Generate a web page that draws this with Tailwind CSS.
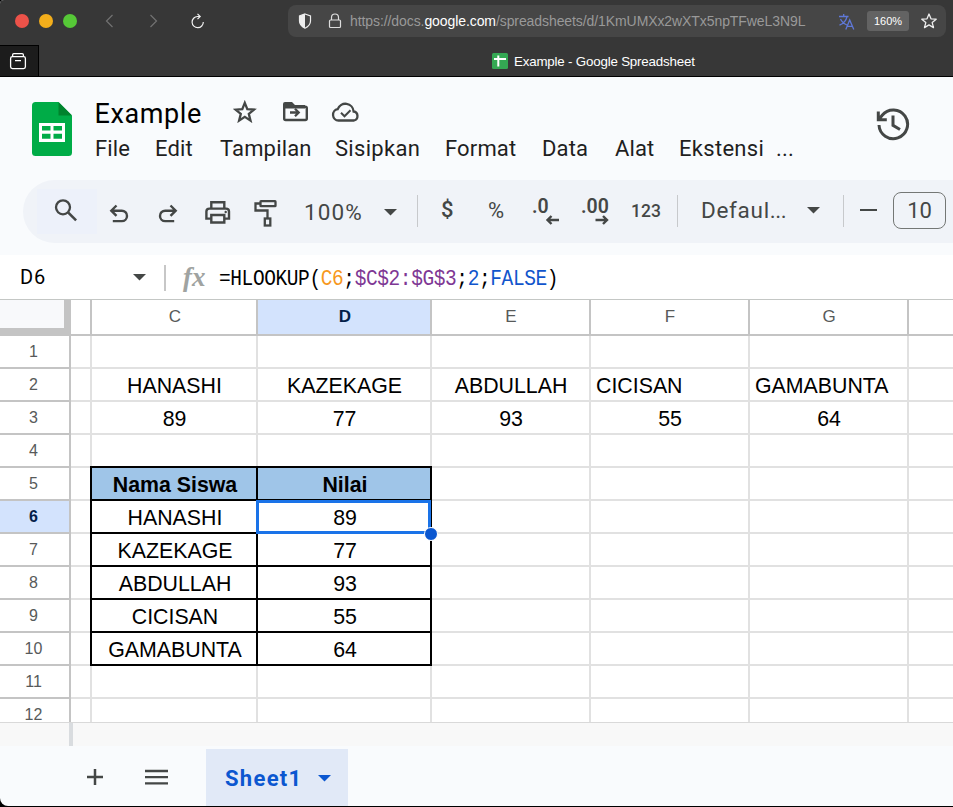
<!DOCTYPE html>
<html lang="id">
<head>
<meta charset="utf-8">
<title>Example - Google Spreadsheet</title>
<script src="https://cdn.jsdelivr.net/npm/@tailwindcss/browser@4"></script>
</head>
<body class="w-[953px] h-[807px] overflow-hidden bg-black font-['Liberation_Sans',sans-serif]">
<div class="flex flex-col w-[953px] h-[806px] overflow-hidden rounded-bl-[8px] rounded-tl-[4px] bg-[#f9fbfd]">

  <!-- Browser toolbar -->
  <div class="flex items-center h-[45px] shrink-0 bg-[#373737] pb-[3px]">
    <div class="flex gap-[10px] ml-[15px]">
      <span class="size-[14px] rounded-full bg-[#ec5249]"></span>
      <span class="size-[14px] rounded-full bg-[#f3ae1b]"></span>
      <span class="size-[14px] rounded-full bg-[#56c837]"></span>
    </div>
    <svg class="ml-[28px]" width="8" height="14" viewBox="105 14 8 14" fill="none" stroke="#727272" stroke-width="1.2"><path d="M112.5 15l-6 6 6 6"/></svg>
    <svg class="ml-[37px]" width="8" height="14" viewBox="150 14 8 14" fill="none" stroke="#727272" stroke-width="1.2"><path d="M150.5 15l6 6-6 6"/></svg>
    <svg class="ml-[33px]" width="14" height="16" viewBox="191 13 14 16" fill="none" stroke="#f0f0f0" stroke-width="1.2"><path d="M199.5 16.5h-2a5.6 5.6 0 1 0 5.8 5.5M197.500 13.800l2.700 2.700-2.700 2.700"/></svg>
    <div class="flex items-center ml-[83px] w-[658px] h-[32px] rounded-[8px] bg-[#464646] text-[14px] text-[#999]">
      <svg class="ml-[10px]" width="14" height="16" viewBox="298 13 14 16"><path d="M305 14l5.500 2v5c0 3-2 5.500-5.500 7.200-3.500-1.700-5.500-4.200-5.500-7.200v-5z" fill="none" stroke="#eee" stroke-width="1.200"/><path d="M305 14v14.200c-3.500-1.700-5.500-4.200-5.500-7.200v-5z" fill="#eee"/></svg>
      <svg class="ml-[16px]" width="14" height="16" viewBox="328 13 14 16" fill="none" stroke="#ddd" stroke-width="1.200"><rect x="329.500" y="20" width="11" height="7.500" rx="1"/><path d="M331.500 20v-2.500a3.500 3.500 0 0 1 7 0v2.500"/></svg>
      <span class="ml-[8px] w-[480px] whitespace-nowrap tracking-[-0.085px]">https://docs.<span class="text-white">google.com</span>/spreadsheets/d/1KmUMXx2wXTx5npTFweL3N9L</span>
      <svg class="ml-[8px]" width="18" height="17" viewBox="838 12 18 17" fill="none" stroke="#5f78d8" stroke-width="1.300"><path d="M839 15.500h9.500M843.700 13v2.500M840.500 18c1.500 3 3.500 5 6.500 6M847 15.700c-1 4.500-3.500 7-7.500 8.500M845.800 28.500l3.900-9.500 4.100 9.500M847.200 25.300h5.200"/></svg>
      <span class="ml-[11px] w-[42px] h-[20px] rounded-[3px] bg-[#636363] text-white text-[11px] leading-[20px] text-center">160%</span>
      <svg class="ml-[12px]" width="16" height="16" viewBox="921 13 16 16" fill="none" stroke="#eee" stroke-width="1.300" stroke-linejoin="round"><path d="M929 14l2 4.800 5.200.4-4 3.400 1.300 5-4.500-2.700-4.500 2.700 1.300-5-4-3.400 5.200-.4z"/></svg>
    </div>
  </div>

  <!-- Tab strip -->
  <div class="flex h-[32px] shrink-0 bg-[#373737] border-b border-black">
    <div class="w-[39px] h-[31px] bg-[#1c1c1c] border-t border-r border-black">
      <svg class="ml-[9px] mt-[6px]" width="18" height="18" viewBox="9 52 18 18" fill="none" stroke="#fff" stroke-width="1.300"><rect x="10.600" y="56.600" width="14.800" height="12" rx="1.800"/><path d="M12.600 56.500v-1.600q0-1.300 1.300-1.300h8.200q1.300 0 1.300 1.300v1.600M15 60.600h6"/></svg>
    </div>
    <div class="flex items-center ml-[453px] gap-[6px]">
      <svg width="16" height="16" viewBox="0 0 16 16"><rect width="16" height="16" rx="1.500" fill="#34a853"/><path d="M2 6h12M6.300 2.500v11" stroke="#fff" stroke-width="2"/></svg>
      <span class="mt-[2px] text-white text-[13.330px] tracking-[-0.190px] whitespace-nowrap">Example - Google Spreadsheet</span>
    </div>
  </div>

  <!-- Document header -->
  <div class="flex h-[103px] shrink-0 font-[Roboto,sans-serif]">
    <svg class="ml-[32px] mt-[25px]" width="40" height="54" viewBox="0 0 40 54"><path d="M3.500 0H26.500L40 13.500V50.500Q40 54 36.500 54H3.500Q0 54 0 50.500V3.500Q0 0 3.500 0z" fill="#00ac47"/><path d="M26.500 0L40 13.500H26.500z" fill="#00832d"/><path d="M7 21h26v19H7zM10 24v4.500h8.500V24zM21.500 24v4.500H30V24zM10 31.700v5h8.500v-5zM21.500 31.700v5H30v-5z" fill="#fff" fill-rule="evenodd"/></svg>
    <div class="flex flex-col ml-[22px] w-[782px]">
      <div class="flex items-center mt-[20px] h-[34px]">
        <span class="w-[139px] text-[27px] leading-[34px] text-black tracking-[0.600px] pl-[0.500px]">Example</span>
        <svg class="mb-[7px]" width="24" height="24" viewBox="233 99 24 24" fill="none" stroke="#444746" stroke-width="2.300"><path d="M244.800 102.800l2.500 6.300 6.700.500-5.200 4.300 1.700 6.700-5.700-3.700-5.700 3.700 1.700-6.700-5.200-4.300 6.700-.500z"/></svg>
        <svg class="ml-[25px] mb-[4px]" width="27" height="22" viewBox="282 102 27 22"><path d="M284.200 107v12.500q0 1.500 1.500 1.500h19.600q1.500 0 1.500-1.500v-10.200q0-1.500-1.500-1.500H295" fill="none" stroke="#444746" stroke-width="2.400"/><path d="M283 108v-3q0-2 2-2h7l3 3h10v3.500H283z" fill="#444746"/><path d="M290 113.500h8M295 109.800l3.700 3.700-3.700 3.700" fill="none" stroke="#444746" stroke-width="2.300"/></svg>
        <svg class="ml-[22px] mb-[4px]" width="30" height="22" viewBox="331 101 30 22" fill="none" stroke="#444746" stroke-width="2.300"><path d="M338.500 120.500a5.700 5.700 0 0 1-.8-11.300 8.200 8.200 0 0 1 15.900 2.300 4.600 4.600 0 0 1 .4 9z"/><path d="M341 112.800l3.500 3.500 6-6" stroke-width="2"/></svg>
      </div>
      <div class="flex ml-[1px] mt-[3px] h-[29px] text-[22px] leading-[29px] text-[#1f1f1f] whitespace-nowrap tracking-[0.150px]">
        <span class="w-[60px]">File</span><span class="w-[65px]">Edit</span><span class="w-[115px]">Tampilan</span><span class="w-[110px] tracking-[0.300px]">Sisipkan</span><span class="w-[97px]">Format</span><span class="w-[73px]">Data</span><span class="w-[64px]">Alat</span><span class="w-[97px] tracking-[0.300px]">Ekstensi</span><span>...</span>
      </div>
    </div>
    <svg class="mt-[30px]" width="34" height="34" viewBox="876 107 34 34" fill="none" stroke="#444746" stroke-width="3"><path d="M879 125a14.300 14.300 0 1 0 3.200-9.700l-3.400 4.200M878.300 111.500v8.300h8.500M893 115.500v9.800l7 4.200"/></svg>
  </div>

  <!-- Toolbar -->
  <div class="flex h-[63px] shrink-0 ml-[23px] rounded-l-[32px] bg-[#f0f3f8] text-[#444746] font-[Roboto,sans-serif] font-medium whitespace-nowrap overflow-hidden">
    <div class="ml-[14px] mt-[9px] w-[60px] h-[45px] bg-[#edf1fa] shrink-0">
      <svg class="ml-[16px] mt-[8px]" width="26" height="26" viewBox="53 197 26 26" fill="none" stroke="#444746" stroke-width="2.300"><circle cx="63" cy="207.300" r="7"/><path d="M68.300 212.600l7.800 7.800" stroke-width="2.600"/></svg>
    </div>
    <svg class="ml-[11px] mt-[24px] shrink-0" width="22" height="20" viewBox="108 204 22 20" fill="none" stroke="#444746" stroke-width="2.400"><path d="M116.500 205.500l-5.200 5.200 5.200 5.200M111.500 210.700h10.300a5.200 5.200 0 0 1 0 10.400h-9"/></svg>
    <svg class="ml-[27px] mt-[24px] shrink-0" width="22" height="20" viewBox="157 204 22 20" fill="none" stroke="#444746" stroke-width="2.400"><path d="M170.500 205.500l5.200 5.200-5.200 5.200M175.500 210.700h-10.300a5.200 5.200 0 0 0 0 10.400h9"/></svg>
    <svg class="ml-[25px] mt-[20px] shrink-0" width="28" height="25" viewBox="204 200 28 25" fill="none" stroke="#444746" stroke-width="2.400"><path d="M211.300 208v-5.800h13v5.800M211 218.600h-4.600v-7q0-3 3-3h16.600q3 0 3 3v7H225"/><path d="M211.300 215h13v7.500h-13z"/><circle cx="225.700" cy="212" r=".6" stroke-width="1.200"/></svg>
    <svg class="ml-[21px] mt-[19px] shrink-0" width="26" height="29" viewBox="253 199 26 29" fill="none" stroke="#444746" stroke-width="2.300"><rect x="260.500" y="201.200" width="15" height="5" rx=".5"/><path d="M260.500 203.500h-5v7h12v8"/><rect x="264.800" y="218.500" width="5.500" height="7"/></svg>
    <span class="ml-[25px] mt-[17px] w-[80px] text-[22.500px] leading-[30px] font-normal tracking-[1.100px]">100%</span>
    <svg class="mt-[29px] shrink-0" width="13" height="7" viewBox="0 0 13 7"><path d="M0 0h13L6.500 6.500z" fill="#444746"/></svg>
    <div class="ml-[20px] mt-[15px] w-px h-[32px] bg-[#c7c9cc] shrink-0"></div>
    <span class="ml-[23px] mt-[15px] w-[47px] text-[22px] leading-[30px]">$</span>
    <span class="mt-[16px] w-[44px] text-[22px] leading-[30px] font-normal tracking-[1px]">%</span>
    <svg class="mt-[11px] shrink-0" width="28" height="36" viewBox="532 191 28 36"><text x="532" y="213.200" font-size="19.500" fill="#444746" font-family="Roboto" font-weight="600">.0</text><path d="M559 220h-11.500M551.500 216l-4 4 4 4" fill="none" stroke="#444746" stroke-width="2.400"/></svg>
    <svg class="ml-[21px] mt-[11px] shrink-0" width="29" height="36" viewBox="581 191 29 36"><text x="581" y="213.200" font-size="19.500" fill="#444746" font-family="Roboto" font-weight="600">.00</text><path d="M595.500 220h11.500M603 216l4 4-4 4" fill="none" stroke="#444746" stroke-width="2.400"/></svg>
    <span class="ml-[21px] mt-[16px] w-[46px] text-[17.500px] leading-[30px]">123</span>
    <div class="mt-[15px] w-px h-[32px] bg-[#c7c9cc] shrink-0"></div>
    <span class="ml-[23px] mt-[15px] w-[106px] text-[22.500px] leading-[30px] font-normal tracking-[0.700px]">Defaul<span class="tracking-[-0.500px]">...</span></span>
    <svg class="mt-[27px] shrink-0" width="13" height="7" viewBox="0 0 13 7"><path d="M0 0h13L6.500 6.500z" fill="#444746"/></svg>
    <div class="ml-[23px] mt-[15px] w-px h-[32px] bg-[#c7c9cc] shrink-0"></div>
    <div class="ml-[16px] mt-[29px] w-[17px] h-[2px] bg-[#444746] shrink-0"></div>
    <div class="ml-[16px] mt-[12px] w-[53px] h-[37px] rounded-[8px] border border-[#747775] shrink-0 text-center text-[22px] leading-[36px] font-normal">10</div>
  </div>

  <!-- Formula bar -->
  <div class="flex h-[45px] mt-[12px] mb-[-1px] shrink-0 bg-white border-b border-[#c4c7c5]">
    <span class="ml-[20px] mt-[7px] w-[113px] text-[20px] leading-[30px] text-black tracking-[0.800px] font-[Roboto,sans-serif]">D6</span>
    <svg class="mt-[19px] shrink-0" width="13" height="7" viewBox="0 0 13 7"><path d="M0 0h13L6.500 6.500z" fill="#444746"/></svg>
    <div class="ml-[18px] mt-[10px] w-[2px] h-[26px] bg-[#c7c7c7]"></div>
    <span class="ml-[17px] mt-[7px] w-[36px] text-[27px] leading-[30px] font-bold italic text-[#a0a3a1] font-['Liberation_Serif',serif]">fx</span>
    <span class="mt-[10px] h-[28px] scale-y-[1.1] text-[19.500px] leading-[29px] tracking-[-0.400px] text-black whitespace-pre font-['Liberation_Mono',monospace]">=HLOOKUP(<span class="text-[#f7981d]">C6</span>;<span class="text-[#7e3794]">$C$2:$G$3</span>;<span class="text-[#1155cc]">2</span>;<span class="text-[#1155cc]">FALSE</span>)</span>
  </div>

  <!-- Sheet -->
  <div class="mt-px relative h-[422px] shrink-0 overflow-hidden bg-white">
    <div class="grid w-[955px] grid-cols-[71px_21px_166px_174px_159px_159px_159px_46px] text-[17px] leading-[34px] text-center text-[#575a5a]">
      <div class="h-[36px] bg-[#f8f9fb] border-r-[7px] border-b-[8px] border-[#c4c4c4]"></div>
      <div class="h-[36px] border-r-2 border-b-2 border-[#c4c4c4]"></div>
      <div class="h-[36px] pl-[2px] border-r-2 border-b-2 border-[#c4c4c4]">C</div>
      <div class="h-[36px] pl-[2px] border-r-2 border-b-2 border-[#c4c4c4] bg-[#d3e3fd] font-bold text-[#041e49]">D</div>
      <div class="h-[36px] pl-[1px] border-r-2 border-b-2 border-[#c4c4c4]">E</div>
      <div class="h-[36px] pl-[1px] border-r-2 border-b-2 border-[#c4c4c4]">F</div>
      <div class="h-[36px] pl-[1px] border-r-2 border-b-2 border-[#c4c4c4]">G</div>
      <div class="h-[36px] border-b-2 border-[#c4c4c4]"></div>
    </div>
    <div id="rows" class="grid w-[955px] grid-cols-[71px_21px_166px_174px_159px_159px_159px_46px] auto-rows-[33px] text-center text-[21.330px] text-black"></div>
    <!-- Active cell outline and fill handle -->
    <div class="absolute left-[256px] top-[200px] w-[175px] h-[34px] border-[3px] border-[#1a73e8]"></div>
    <div class="absolute left-[424px] top-[227px] size-[14px] rounded-full bg-[#0b57d0] border border-white"></div>
  </div>

  <!-- Horizontal scroll area -->
  <div class="h-[24px] shrink-0 bg-[#f8f8f8] border-t border-[#d9d9d9] flex">
    <div class="ml-[69px] w-[4px] bg-[#d9dcdf]"></div>
  </div>

  <!-- Sheet tabs -->
  <div class="flex h-[60px] shrink-0">
    <svg class="ml-[86px] mt-[23px]" width="18" height="18" viewBox="86 769 18 18" stroke="#444746" stroke-width="2.500"><path d="M95 769v16M87 777h16" /></svg>
    <svg class="ml-[41px] mt-[22px]" width="23" height="18" viewBox="145 768 23 18" stroke="#444746" stroke-width="2.300"><path d="M145 771h23M145 777.200h23M145 783.300h23"/></svg>
    <div class="flex ml-[38px] mt-[3px] w-[142px] h-[57px] bg-[#e1e9f7] text-[#0b57d0]">
      <span class="ml-[19px] mt-[15px] w-[93px] text-[22px] leading-[30px] font-bold tracking-[1.300px] font-[Roboto,sans-serif]">Sheet1</span>
      <svg class="mt-[26px]" width="13" height="7" viewBox="0 0 13 7"><path d="M0 0h13L6.500 6.500z" fill="#0b57d0"/></svg>
    </div>
  </div>
</div>

<script>
const data = {
  2: ['HANASHI', 'KAZEKAGE', 'ABDULLAH', 'CICISAN', 'GAMABUNTA'],
  3: ['89', '77', '93', '55', '64'],
  5: ['Nama Siswa', 'Nilai'],
  6: ['HANASHI', '89'],
  7: ['KAZEKAGE', '77'],
  8: ['ABDULLAH', '93'],
  9: ['CICISAN', '55'],
  10: ['GAMABUNTA', '64'],
};
const plain = 'border-r-2 border-b-2 border-[#e1e1e1] leading-[34px] pl-[1px]';
const left = 'border-r-2 border-b-2 border-[#e1e1e1] leading-[34px] text-left pl-[5px]';
const boxed = 'relative -mt-[2px] -ml-[2px] border-2 border-black leading-[34px] pl-[2px]';
const title = 'relative -mt-[2px] -ml-[2px] border-2 border-black leading-[34px] pl-[2px] font-bold bg-[#9fc5e8]';
const head = 'border-r-2 border-b-2 border-[#c4c4c4] text-[16px] leading-[31px] pr-[2px] text-[#575a5a]';
const headOn = 'border-r-2 border-b-2 border-[#c4c4c4] text-[16px] leading-[31px] pr-[2px] font-bold text-[#041e49] bg-[#d3e3fd]';
const rows = document.getElementById('rows');
const add = (cls, text) => {
  const d = document.createElement('div');
  d.className = cls;
  d.textContent = text || '';
  rows.appendChild(d);
};
for (let r = 1; r <= 12; r++) {
  add(r === 6 ? headOn : head, r);
  add(plain);
  for (let c = 0; c < 6; c++) {
    let cls = plain;
    if (c < 2 && r >= 5 && r <= 10) cls = r === 5 ? title : boxed;
    if (r === 2 && (c === 3 || c === 4)) cls = left;
    add(cls, (data[r] || [])[c]);
  }
}
</script>
</body>
</html>
